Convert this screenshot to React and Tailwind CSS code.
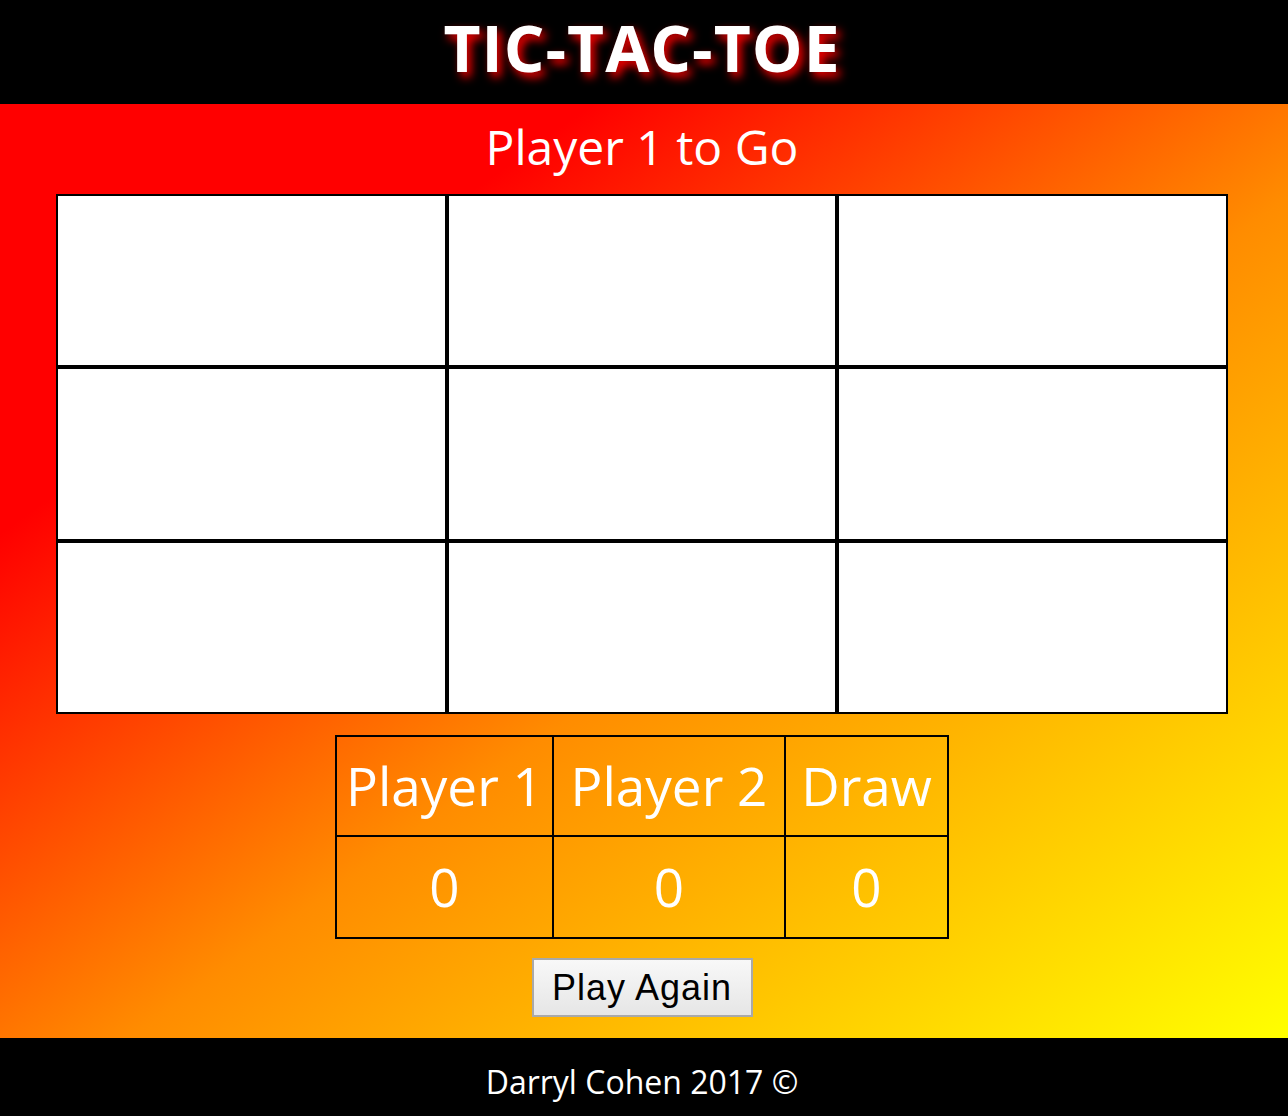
import React, { useState } from "react";

const FONT = "font-['Open_Sans','Noto_Sans',sans-serif]";

const emptyBoard = () => Array(9).fill(null);

export default function App() {
  const [board, setBoard] = useState(emptyBoard());
  const [turn, setTurn] = useState(1);
  const [score] = useState({ p1: 0, p2: 0, draw: 0 });

  // place a mark in an empty square and pass the turn
  const play = (i) => {
    if (board[i]) return;
    const next = [...board];
    next[i] = turn === 1 ? "X" : "O";
    setBoard(next);
    setTurn(turn === 1 ? 2 : 1);
  };

  const reset = () => {
    setBoard(emptyBoard());
    setTurn(1);
  };

  return (
    <div className={`${FONT} min-h-[1116px] flex flex-col`}>
      {/* header */}
      <header className="bg-black h-[104px] pr-[4px] text-center">
        <h1 className="text-white text-[64px] font-bold leading-normal tracking-[1px] [text-shadow:4px_5px_10px_#ff0000]">
          TIC-TAC-TOE
        </h1>
      </header>

      {/* game area */}
      <main className="bg-[linear-gradient(to_bottom_right,#ff0000_23%,#ff8c00_55%,#ffff00)] pt-[15px] pb-[21px] pr-[4px] flex flex-col items-center">
        <h2 className="text-white text-[48px] leading-[56px] font-normal">
          Player {turn} to Go
        </h2>

        <div className="mt-[19px] w-[1172px] h-[520px] grid grid-cols-3 grid-rows-3">
          {board.map((cell, i) => (
            <button
              key={i}
              onClick={() => play(i)}
              className="bg-white border-2 border-black text-black text-[96px] font-bold flex items-center justify-center"
            >
              {cell}
            </button>
          ))}
        </div>

        {/* score table */}
        <div className="mt-[21px] grid grid-cols-[217px_232px_161px] grid-rows-[100px_100px] border-2 border-black text-white text-[53px]">
          <div className="border-r-2 border-b-2 border-black flex items-center justify-center">Player 1</div>
          <div className="border-r-2 border-b-2 border-black flex items-center justify-center">Player 2</div>
          <div className="border-b-2 border-black flex items-center justify-center">Draw</div>
          <div className="border-r-2 border-black flex items-center justify-center">{score.p1}</div>
          <div className="border-r-2 border-black flex items-center justify-center">{score.p2}</div>
          <div className="flex items-center justify-center">{score.draw}</div>
        </div>

        <button
          onClick={reset}
          className="mt-[19px] w-[221px] h-[59px] border-2 border-[#a9a9a9] bg-gradient-to-b from-[#f8f8f8] to-[#e6e6e6] text-black text-[36px] tracking-[1px] font-['Liberation_Sans',Arial,sans-serif] leading-none"
        >
          Play Again
        </button>
      </main>

      {/* footer */}
      <footer className="bg-black h-[78px] pt-[10px] pr-[4px] flex items-center justify-center">
        <p className="text-white text-[32px] font-medium">Darryl Cohen 2017 ©</p>
      </footer>
    </div>
  );
}
